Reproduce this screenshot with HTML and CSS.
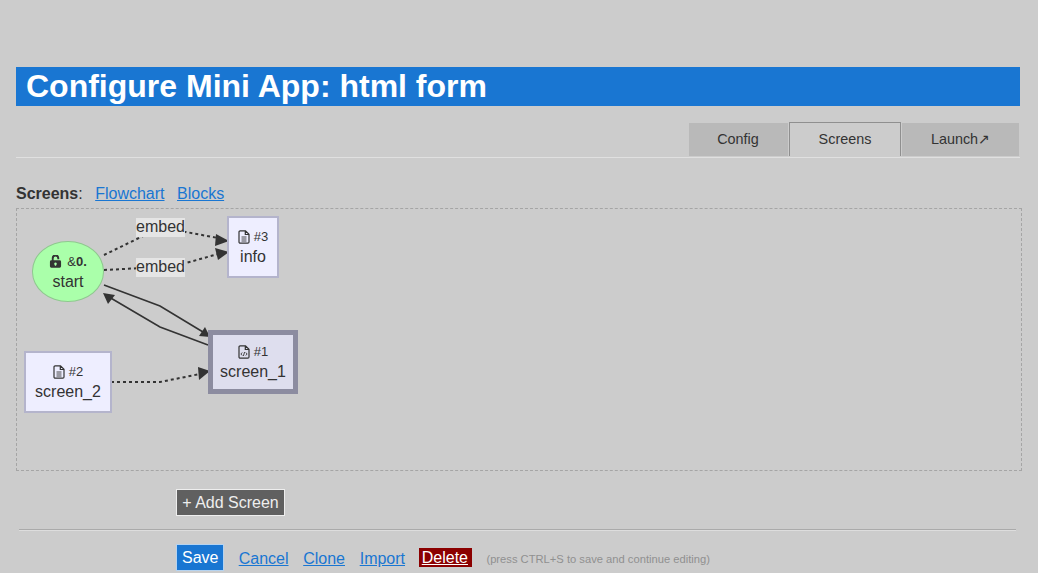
FILE: index.html
```html
<!DOCTYPE html>
<html lang="en">
<head>
<meta charset="utf-8">
<title>Configure Mini App</title>
<link rel="stylesheet" href="styles.css">
</head>
<body>
<h1 class="title">Configure Mini App: html form</h1>
<nav class="tabs">
  <a class="tab tab-config">Config</a>
  <a class="tab tab-active">Screens</a>
  <a class="tab tab-launch">Launch↗</a>
</nav>
<p class="subnav"><b>Screens</b>: <a href="#" class="link first">Flowchart</a><a href="#" class="link">Blocks</a></p>
<div class="canvas">
  <svg class="edges" width="1038" height="573" viewBox="0 0 1038 573">
    <g fill="none" stroke="#333" stroke-width="2">
      <path class="dot" d="M104 255L143 236L186 232L218 238"/>
      <path class="dot" d="M104 270L143 268L186 263L218 254"/>
      <path class="dot" d="M111 382L160 382L200 374"/>
      <path stroke-width="1.6" d="M104 285L160 306L203 332"/>
      <path stroke-width="1.6" d="M208 345L160 327L109 297"/>
    </g>
    <g fill="#333">
      <polygon points="229,241 216,234 215,246"/>
      <polygon points="229,252 215,248 218,260"/>
      <polygon points="210,337 199,336 205,327"/>
      <polygon points="103,293 115,295 108,304"/>
      <polygon points="210,371 198,367 199,380"/>
    </g>
  </svg>
  <span class="edge-label label-a">embed</span>
  <span class="edge-label label-b">embed</span>
  <div class="node node-start">
    <div class="node-head"><svg class="icon icon-lock" viewBox="0 0 14 14"><path fill="#333" fill-rule="evenodd" d="M3 6V4a4 4 0 0 1 8-.6V5H9V4a2 2 0 0 0-4 0v2h6.500a1.500 1.500 0 0 1 1.500 1.500v5a1.500 1.500 0 0 1-1.500 1.500h-9A1.500 1.500 0 0 1 1 12.500v-5A1.500 1.500 0 0 1 2.500 6zM7 8.500a1.400 1.400 0 0 0-.7 2.600V12h1.400v-.9A1.400 1.400 0 0 0 7 8.500z" transform="translate(0 -.3)"/></svg><span class="node-id">&amp;<b>0.</b></span></div>
    <div class="node-name">start</div>
  </div>
  <div class="node node-info">
    <div class="node-head"><svg class="icon" viewBox="0 0 12 14"><use href="#file"/><path stroke="#333" stroke-width=".9" d="M3.500 7h5M3.500 9h5M3.500 11h5"/></svg><span class="node-id">#3</span></div>
    <div class="node-name">info</div>
  </div>
  <div class="node node-two">
    <div class="node-head"><svg class="icon" viewBox="0 0 12 14"><use href="#file"/><path stroke="#333" stroke-width=".9" d="M3.500 7h5M3.500 9h5M3.500 11h5"/></svg><span class="node-id">#2</span></div>
    <div class="node-name">screen_2</div>
  </div>
  <div class="node node-one">
    <div class="node-head"><svg class="icon" viewBox="0 0 12 14"><use href="#file"/><path fill="none" stroke="#333" stroke-width=".9" d="M4.200 7.500L2.900 9l1.300 1.500M7.800 7.500L9.100 9l-1.300 1.500M6.600 7l-1.200 4"/></svg><span class="node-id">#1</span></div>
    <div class="node-name">screen_1</div>
  </div>
  <svg class="defs" width="0" height="0"><defs><path id="file" fill="none" stroke="#333" stroke-width="1.200" d="M1 2a1.200 1.200 0 0 1 1.200-1.200H7.500L11 4.300V12a1.200 1.200 0 0 1-1.200 1.200H2.200A1.200 1.200 0 0 1 1 12zM7.300 1v3.500H11"/></defs></svg>
</div>
<div class="add-row"><button class="btn btn-add">+ Add Screen</button></div>
<hr class="rule">
<div class="actions">
  <button class="btn btn-save">Save</button>
  <a href="#" class="link">Cancel</a>
  <a href="#" class="link">Clone</a>
  <a href="#" class="link">Import</a>
  <a href="#" class="delete">Delete</a>
  <span class="hint">(press CTRL+S to save and continue editing)</span>
</div>
</body>
</html>
```
FILE: styles.css
```css
* { box-sizing: border-box; }
html, body { height: 573px; overflow: hidden; }
body {
  margin: 0;
  padding: 67px 16px 0;
  background: #ccc;
  color: #333;
  font-family: "Liberation Sans", Arial, sans-serif;
  font-size: 16px;
}
.title {
  margin: 0 2px 0 0;
  height: 39px;
  padding-left: 10px;
  background: #1976d2;
  color: #fff;
  font-size: 32px;
  line-height: 39px;
  font-weight: bold;
}
.tabs {
  display: flex;
  justify-content: flex-end;
  align-items: flex-end;
  gap: 1px;
  margin: 17px 2px 0 0;
  padding-right: 1px;
  height: 35px;
  border-bottom: 1px solid #e0e0e0;
  padding-bottom: 1px;
}
.tab {
  display: flex;
  align-items: center;
  justify-content: center;
  height: 33px;
  padding-bottom: 2px;
  background: #b9b9b9;
  font-size: 14.4px;
}
.tab-config { width: 99px; padding-right: 1px; }
.tab-launch { width: 117px; }
.tab-active {
  width: 112px;
  height: 34px;
  background: #ccc;
  border: 1px solid #8f8f8f;
  border-bottom: 0;
}
.subnav {
  margin: 27px 0 0;
  height: 23px;
  line-height: 18px;
}
.link { color: #1976d2; text-decoration: underline; }
.subnav .link { margin-left: 12.5px; }
.subnav .first { margin-left: 8px; }
.canvas {
  position: relative;
  width: 1006px;
  height: 263px;
  border: 1px dashed #a5a5a5;
}
.edges { position: absolute; left: -17px; top: -209px; pointer-events: none; }
.dot { stroke-dasharray: 3 3; }
.defs { position: absolute; }
.edge-label {
  position: absolute;
  width: 49px;
  height: 19px;
  background: #e5e5e5;
  line-height: 18px;
  text-align: center;
}
.label-a { left: 119px; top: 9px; }
.label-b { left: 119px; top: 49px; }
.node {
  position: absolute;
  display: flex;
  flex-direction: column;
  align-items: center;
  justify-content: center;
  height: 62px;
  background: #eeeeff;
  border: 2px solid #b4b4cc;
}
.node-head {
  display: flex;
  align-items: center;
  gap: 5px;
  height: 20px;
  font-size: 13px;
}
.node-name { line-height: 20px; }
.icon { width: 12px; height: 14px; margin-right: -1px; }
.icon-lock { width: 13px; height: 13px; margin-right: 0; }
.node-id { line-height: 20px; }
.node-start {
  left: 15px;
  top: 32px;
  width: 72px;
  height: 61px;
  border: 1px solid #8fc88f;
  border-radius: 36px / 30px;
  background: #aaffaa;
}
.node-info { left: 210px; top: 7px; width: 52px; }
.node-two { left: 7px; top: 142px; width: 88px; }
.node-one {
  left: 191px;
  top: 121px;
  width: 90px;
  height: 64px;
  background: #dedeee;
  border: 5px solid #8c8ca0;
}
.add-row { margin: 18px 0 0 160px; height: 27px; }
.btn {
  border: 1px solid #eee;
  font: 16px "Liberation Sans", Arial, sans-serif;
  color: #eee;
  padding: 0 5px;
}
.btn-add { height: 27px; background: #606060; width: 109px; }
.rule {
  margin: 13px 6px 0 3px;
  height: 2px;
  border: 0;
  border-top: 1px solid #aaa;
  border-bottom: 1px solid #ddd;
}
.actions {
  display: flex;
  align-items: center;
  margin: 13px 0 0 160px;
  height: 27px;
  gap: 14.7px;
}
.actions .link { padding-top: 2px; }
.btn-save {
  width: 48px;
  height: 27px;
  background: #1976d2;
  color: #fff;
  border-color: #b5d3f0;
}
.delete {
  margin-left: -1px;
  width: 53px;
  background: #8b0000;
  color: #fff;
  text-decoration: underline;
  padding: 1px 0 0 3px;
  height: 19px;
  line-height: 18px;
}
.hint { font-size: 11.2px; color: #909090; padding-top: 2px; }
```
